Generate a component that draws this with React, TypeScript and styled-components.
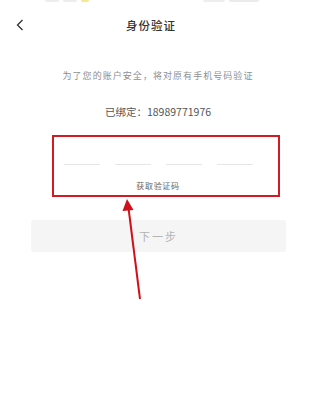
import React from "react";
import styled, { createGlobalStyle } from "styled-components";

const Global = createGlobalStyle`
  html, body { margin: 0; padding: 0; background: #fff; }
  body { font-family: "Noto Sans CJK SC", "Noto Sans", sans-serif; }
  * { box-sizing: border-box; }
`;

const Page = styled.div`
  position: relative;
  width: 300px;
  height: 397px;
  background: #fff;
  overflow: hidden;
`;

const StatusStrip = styled.div`
  height: 4px;
  display: flex;
  align-items: flex-start;
  padding-left: 45px;
  gap: 4px;
`;

const Blob = styled.div<{ $w: number; $c: string; $ml?: number }>`
  width: ${(p) => p.$w}px;
  height: 2px;
  border-radius: 0 0 2px 2px;
  background: ${(p) => p.$c};
  margin-left: ${(p) => p.$ml ?? 0}px;
`;

const Header = styled.div`
  height: 42px;
  display: flex;
  align-items: center;
  padding-left: 16px;
`;

const Back = styled.div`
  width: 12px;
  display: flex;
  align-items: center;
`;

const Title = styled.div`
  flex: 1;
  text-align: center;
  font-size: 11.5px;
  letter-spacing: 1px;
  color: #333;
  font-weight: 500;
  padding-right: 26px;
`;

const Content = styled.div`
  padding-left: 16px;
  display: flex;
  flex-direction: column;
  align-items: center;
`;

const Notice = styled.div`
  margin-top: 23px;
  font-size: 9px;
  line-height: 14px;
  letter-spacing: 1.05px;
  color: #8f8f8f;
`;

const Bound = styled.div`
  margin-top: 21px;
  font-size: 10.5px;
  line-height: 16px;
  color: #555;
`;

const CodeBox = styled.div`
  margin-top: 15px;
  align-self: stretch;
  margin-left: 36px;
  margin-right: 20px;
  border: 2px solid #d11a22;
  padding: 27px 0 4px 10px;
  display: flex;
  flex-direction: column;
`;

const DashRow = styled.div`
  display: flex;
  gap: 15px;
`;

const Dash = styled.div`
  width: 36px;
  height: 1px;
  background: #e6e6e6;
`;

const CodeLink = styled.div`
  margin-top: 16px;
  width: 188px;
  text-align: center;
  font-size: 8px;
  line-height: 10px;
  letter-spacing: 0.7px;
  color: #666;
`;

const NextButton = styled.div`
  margin-top: 23px;
  align-self: stretch;
  margin-left: 15px;
  margin-right: 14px;
  height: 32px;
  border-radius: 3px;
  background: #f5f5f5;
  display: flex;
  align-items: center;
  justify-content: center;
  font-size: 11px;
  letter-spacing: 2px;
  color: #b3b3b3;
`;

const Overlay = styled.svg`
  position: absolute;
  left: 0;
  top: 0;
  pointer-events: none;
`;

export default function App() {
  return (
    <>
      <Global />
      <Page>
        <StatusStrip>
          <Blob $w={14} $c="#ededed" />
          <Blob $w={14} $c="#ededed" />
          <Blob $w={8} $c="#f5e890" />
          <Blob $w={22} $c="#eeeeee" $ml={110} />
          <Blob $w={30} $c="#ebebeb" />
        </StatusStrip>
        <Header>
          <Back>
            <svg width="8" height="12" viewBox="0 0 8 12">
              <path d="M6.5 1 L1.5 6 L6.5 11" fill="none" stroke="#333" strokeWidth="1.3" />
            </svg>
          </Back>
          <Title>身份验证</Title>
        </Header>
        <Content>
          <Notice>为了您的账户安全，将对原有手机号码验证</Notice>
          <Bound>已绑定：18989771976</Bound>
          <CodeBox>
            <DashRow>
              <Dash />
              <Dash />
              <Dash />
              <Dash />
            </DashRow>
            <CodeLink>获取验证码</CodeLink>
          </CodeBox>
          <NextButton>下一步</NextButton>
        </Content>
        <Overlay width="300" height="397" viewBox="0 0 300 397">
          <line x1="140" y1="299" x2="128.5" y2="208" stroke="#d0101a" strokeWidth="2" />
          <polygon points="127,199 122.5,211 133.5,210" fill="#d0101a" />
        </Overlay>
      </Page>
    </>
  );
}
